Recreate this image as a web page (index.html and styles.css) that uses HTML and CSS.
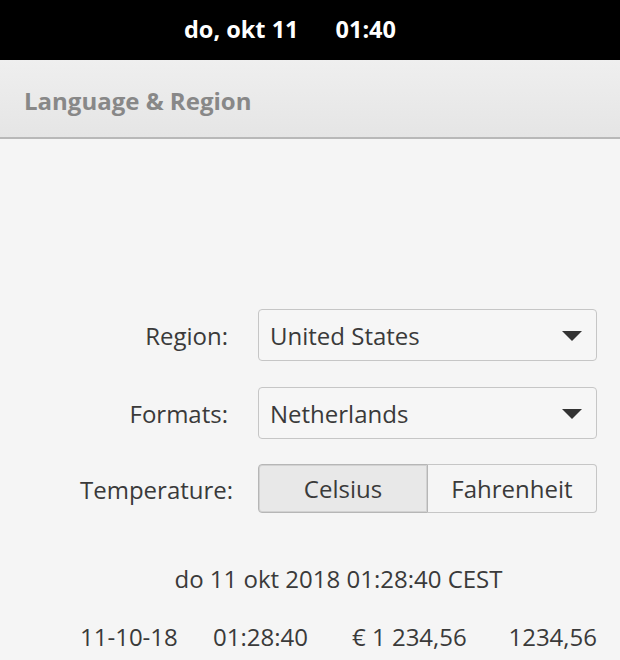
FILE: index.html
```html
<!DOCTYPE html>
<html>
<head>
<meta charset="utf-8">
<link rel="stylesheet" href="styles.css">
</head>
<body>
<div class="topbar">
  <span class="clock-date">do, okt 11</span>
  <span class="clock-time">01:40</span>
</div>
<div class="header">
  <span class="title">Language &amp; Region</span>
</div>
<div class="content">
  <div class="form">
    <div class="label short">Region:</div>
    <div class="combo"><span>United States</span><span class="arrow"></span></div>
    <div class="label short">Formats:</div>
    <div class="combo"><span>Netherlands</span><span class="arrow"></span></div>
    <div class="label">Temperature:</div>
    <div class="toggle">
      <div class="tbtn active">Celsius</div>
      <div class="tbtn">Fahrenheit</div>
    </div>
  </div>
  <div class="preview">
    <div class="full-date">do 11 okt 2018 01:28:40 CEST</div>
    <div class="samples">
      <span class="s-date">11-10-18</span>
      <span class="s-time">01:28:40</span>
      <span class="s-money">€ 1 234,56</span>
      <span class="s-num">1234,56</span>
    </div>
  </div>
</div>
</body>
</html>
```
FILE: styles.css
```css
* { box-sizing: border-box; }
html, body { margin: 0; padding: 0; }
body {
  width: 620px;
  height: 660px;
  overflow: hidden;
  background: #f5f5f5;
  font-family: "Open Sans", "Noto Sans", sans-serif;
  color: #3a3a3a;
}
.topbar {
  height: 60px;
  background: #000;
  color: #fff;
  font-weight: 700;
  font-size: 23.5px;
  display: flex;
  justify-content: center;
  align-items: center;
  gap: 37px;
  padding-right: 40px;
  padding-bottom: 3px;
}
.header {
  height: 79px;
  background: linear-gradient(#efefef, #e5e5e5);
  border-bottom: 2px solid #b8b8b8;
  display: flex;
  align-items: center;
  padding-left: 24px;
  padding-top: 4px;
}
.title {
  font-weight: 700;
  font-size: 24px;
  color: #888;
}
.content {
  padding-top: 170px;
  padding-left: 80px;
  width: 597px;
}
.form {
  display: grid;
  grid-template-columns: 153px 339px;
  column-gap: 25px;
  row-gap: 26px;
  align-items: center;
}
.label {
  text-align: right;
  font-size: 24px;
  white-space: nowrap;
}
.label.short {
  padding-right: 5px;
}
.combo {
  height: 52px;
  border: 1px solid #c6c6c6;
  border-radius: 4px;
  background: #f6f6f6;
  display: flex;
  align-items: center;
  justify-content: space-between;
  padding: 0 14px 0 11px;
  font-size: 24px;
}
.arrow {
  width: 0;
  height: 0;
  border-left: 10px solid transparent;
  border-right: 10px solid transparent;
  border-top: 10px solid #333;
  margin-top: 1px;
}
.toggle {
  display: flex;
  height: 49px;
  margin-top: -1px;
}
.tbtn {
  flex: 1;
  display: flex;
  align-items: center;
  justify-content: center;
  font-size: 24px;
  border: 1px solid #c6c6c6;
  background: #f5f5f5;
}
.tbtn:first-child {
  border-radius: 4px 0 0 4px;
}
.tbtn:last-child {
  border-left: none;
  border-radius: 0 4px 4px 0;
}
.tbtn.active {
  background: #e8e8e8;
  border-color: #b6b6b6;
  box-shadow: inset 0 0 0 1px #d2d2d2;
}
.preview {
  margin-top: 49px;
}
.full-date {
  text-align: center;
  font-size: 24px;
}
.samples {
  display: grid;
  grid-template-columns: 133px 139px 1fr auto;
  margin-top: 25px;
  font-size: 24px;
  white-space: nowrap;
}
```
